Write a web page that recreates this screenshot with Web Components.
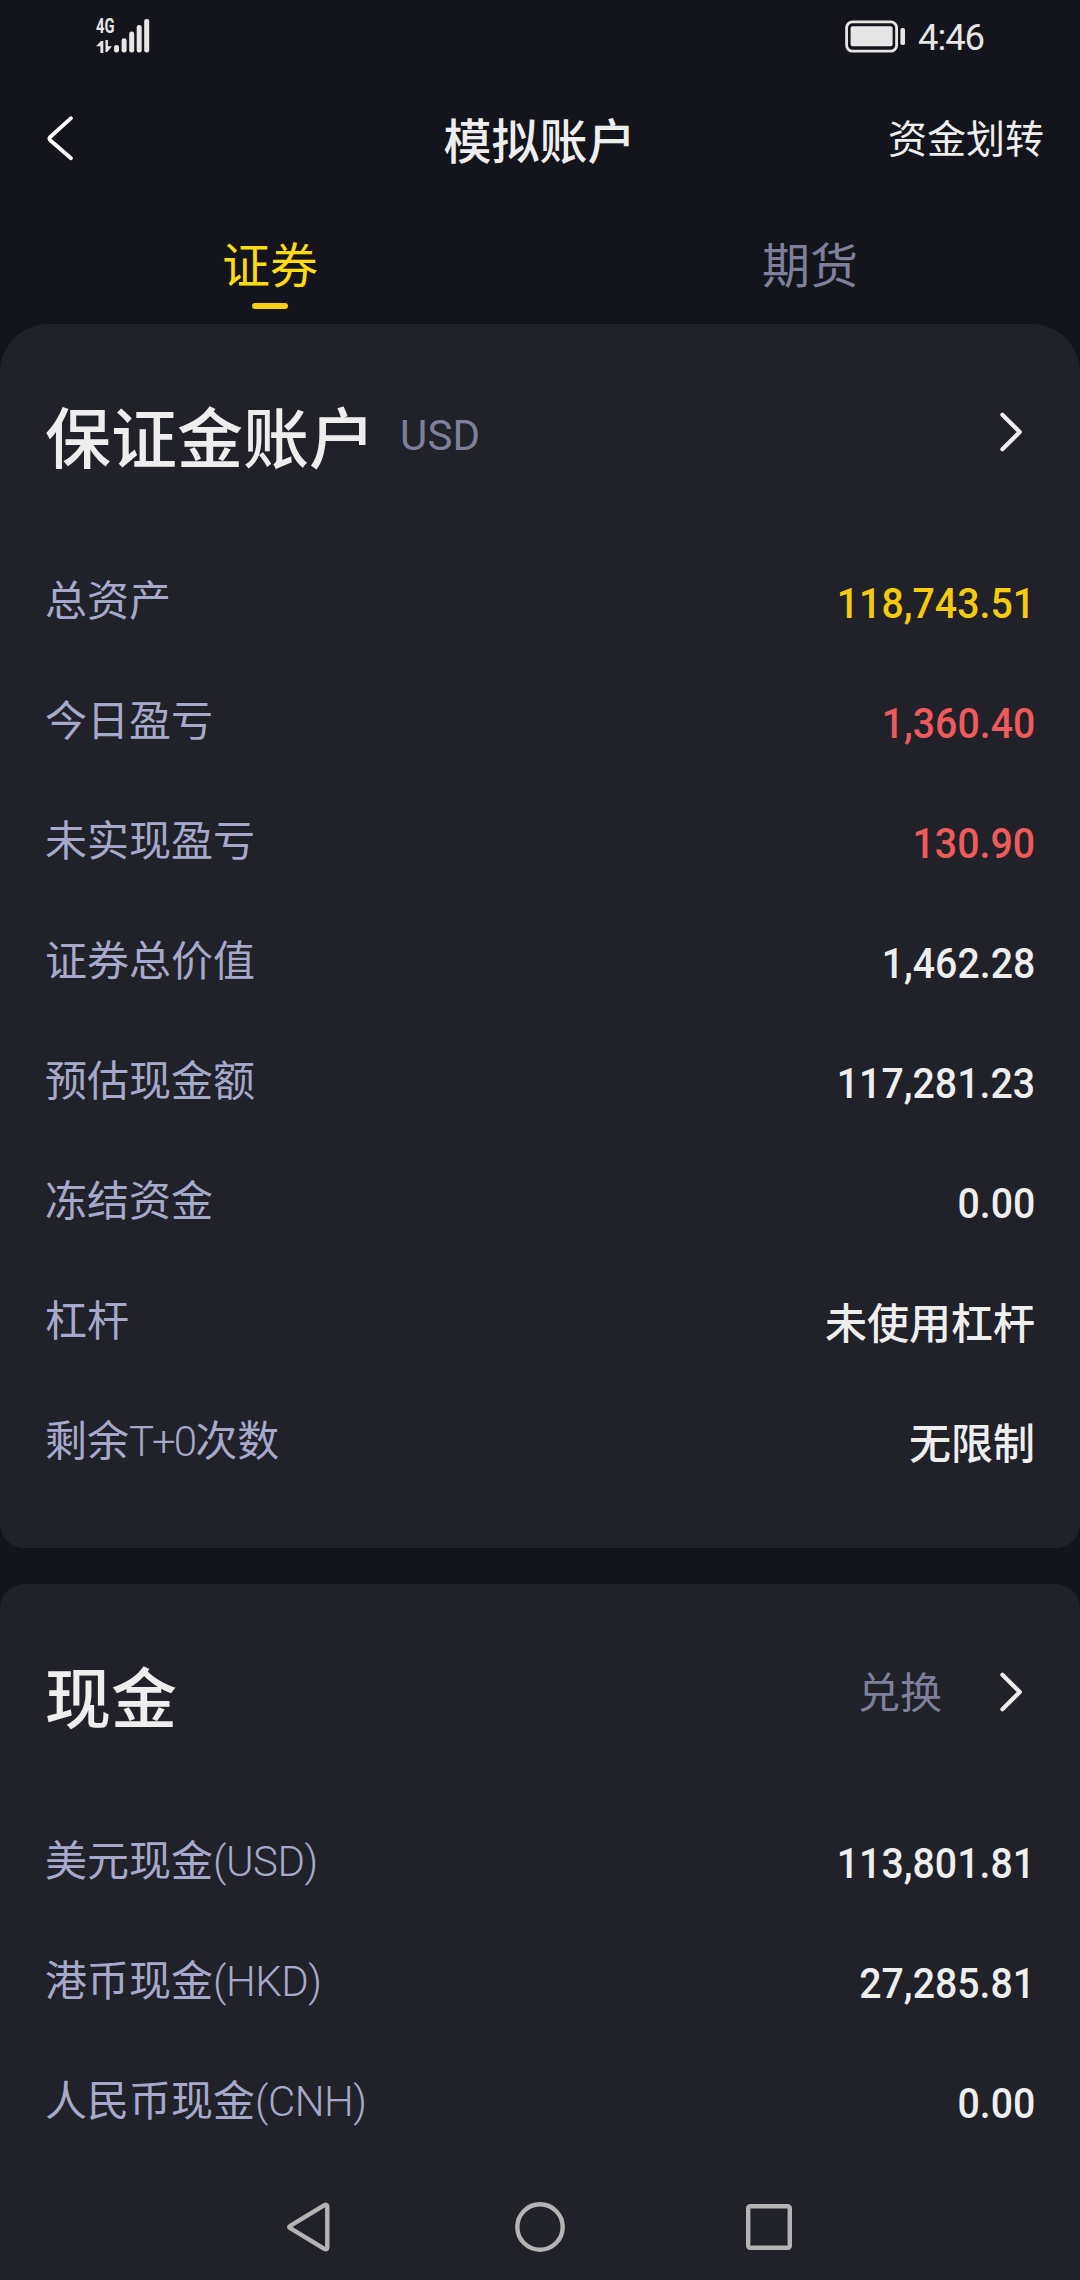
<!DOCTYPE html>
<html lang="zh-CN">
<head>
<meta charset="utf-8">
<title>模拟账户</title>
<style>
html, body { margin: 0; background: #14141c; }
body { width: 1080px; height: 2280px; overflow: hidden; font-family: Roboto, "Noto Sans CJK SC", sans-serif; color: #eee; }
</style>
</head>
<body>
<account-page></account-page>
<script>
const define = (name, html, setup) => customElements.define(name, class extends HTMLElement {
  connectedCallback() {
    if (this.shadowRoot) return;
    const t = document.createElement('template');
    t.innerHTML = html;
    this.attachShadow({ mode: 'open' }).append(t.content.cloneNode(true));
    if (setup) setup(this, this.shadowRoot);
  }
});

define('status-bar', `
<style>
:host { display: flex; justify-content: space-between; align-items: flex-start; height: 72px; padding: 0 97px 0 96px; box-sizing: border-box; }
.left { display: grid; grid-template-columns: 18px 36px; padding-top: 18px; }
.net { font: 700 21px/17px Roboto, sans-serif; transform: scaleX(.7); transform-origin: left; height: 17px; color: #e6e6e6; width: 26px; }
.arrows { grid-row: 2; grid-column: 1; margin-top: 4px; }
.bars { grid-row: 1 / 3; grid-column: 2; }
.right { display: flex; align-items: flex-start; gap: 13px; }
.battery { margin-top: 19px; }
.time { font-size: 36.5px; line-height: 44px; padding-top: 16px; color: #e6e6e6; letter-spacing: -1.1px; width: 65px; white-space: nowrap; }
svg { display: block; }
</style>
<div class="left">
  <span class="net">4G</span>
  <svg class="arrows" width="17" height="13" viewBox="0 0 17 13" fill="#e6e6e6"><path d="M7.3 1v12H4.4V6.3H0L5 1zM9.5 0h2.4v6.2H16L11.2 12H9.5z"/></svg>
  <svg class="bars" width="36" height="36" viewBox="0 0 36 36" fill="#e6e6e6"><rect x="0" y="27" width="5" height="7.5" rx="2.3"/><rect x="7.6" y="20.3" width="5" height="14.2" rx="2.3"/><rect x="15.2" y="13.6" width="5" height="20.9" rx="2.3"/><rect x="22.7" y="7" width="5" height="27.5" rx="2.3"/><rect x="30.2" y="1" width="5" height="33.5" rx="2.3"/></svg>
</div>
<div class="right">
  <svg class="battery" width="61" height="35" viewBox="0 0 61 35"><rect x="2.6" y="2.8" width="50" height="29.4" rx="6" fill="none" stroke="#e6e6e6" stroke-width="2.8"/><rect x="6.6" y="7.3" width="42" height="20" rx="2" fill="#e6e6e6"/><rect x="56.4" y="9" width="4.6" height="17" rx="1.8" fill="#e6e6e6"/></svg>
  <span class="time">4:46</span>
</div>`);

define('chevron-icon', `
<style>:host { display: block; } svg { display: block; }</style>
<svg width="23" height="40" viewBox="0 0 23 40" fill="none" stroke="#eee" stroke-width="4.2" stroke-linecap="round" stroke-linejoin="round"><path d="M2.4 2.7 19.8 20 2.4 37.3"/></svg>`);

define('nav-header', `
<style>
:host { display: grid; grid-template-columns: 1fr auto 1fr; align-items: start; height: 144px; padding: 0 36px 0 45px; box-sizing: border-box; }
svg { display: block; margin-top: 43px; }
.title { font-size: 48px; font-weight: 500; line-height: 60px; padding-top: 41px; margin-right: 10px; }
.action { font-size: 39px; line-height: 50px; padding-top: 43px; text-align: right; }
</style>
<svg width="30" height="48" viewBox="0 0 30 48" fill="none" stroke="#fff" stroke-width="3.8" stroke-linecap="round" stroke-linejoin="round"><path d="M26 3.2 5.2 22 Q3.5 23.6 5.2 25.2L26 43.3"/></svg>
<span class="title"><slot></slot></span>
<span class="action"><slot name="action"></slot></span>`);

define('tab-item', `
<style>
:host { display: flex; flex: 1; flex-direction: column; align-items: center; color: #7e8099; font-size: 48px; line-height: 60px; padding-top: 21px; }
:host([active]) { color: #fddb12; }
i { width: 36px; height: 6px; border-radius: 3px; margin-top: 6px; }
:host([active]) i { background: #f9ce14; }
</style>
<slot></slot><i></i>`);

define('tab-bar', `
<style>:host { display: flex; height: 108px; }</style><slot></slot>`);

define('info-card', `
<style>
:host { display: block; background: #21212a; box-sizing: border-box; padding: 0 45px; border-radius: var(--r, 24px); height: var(--h); }
header { display: flex; align-items: center; height: 218px; }
.name { font-size: 66px; font-weight: 500; line-height: 80px; padding-top: 15px; }
.unit { font-size: 42px; color: #7e8099; margin-left: 25px; padding-top: 4px; letter-spacing: .2px; }
.link { font-size: 42px; color: #7e8099; margin-left: auto; margin-right: 58px; line-height: 60px; padding-top: 2px; }
chevron-icon { margin: 0 12px 2px 0; }
</style>
<header><span class="name"></span><span class="unit"></span><span class="link"></span><chevron-icon></chevron-icon></header>
<slot></slot>`, (el, r) => {
  for (const k of ['name', 'unit', 'link']) r.querySelector('.' + k).textContent = el.getAttribute(k) || '';
});

define('info-row', `
<style>
:host { display: flex; align-items: center; justify-content: space-between; height: 120px; font-size: 42px; line-height: 60px; color: #eee; }
.label { color: #a6a9c9; font-weight: 400; }
.label b { font-weight: 300; letter-spacing: -.5px; }
.label b.mid { letter-spacing: -2px; }
.value { font-weight: 500; padding-top: 6px; }
.value.num { transform: scaleX(.935); transform-origin: right; padding-top: 3px; }
:host([tone="gold"]) { color: #f6cb0e; }
:host([tone="up"]) { color: #ee5b5a; }
</style>
<span class="label"></span><span class="value"><slot></slot></span>`, (el, r) => {
  const label = r.querySelector('.label');
  for (const part of el.getAttribute('label').split(/([ -~]+)/)) {
    if (/^[ -~]+$/.test(part)) {
      const b = document.createElement('b');
      b.textContent = part;
      if (!part.startsWith('(')) b.className = 'mid';
      label.append(b);
    } else label.append(part);
  }
  if (/^[\d.,]+$/.test(el.textContent)) r.querySelector('.value').classList.add('num');
});

define('system-nav', `
<style>:host { display: flex; justify-content: center; gap: 180px; height: 60px; padding-top: 2px; } svg { display: block; }</style>
<svg width="50" height="60" viewBox="0 0 50 60" fill="none" stroke="#b4b4b4" stroke-width="4.4" stroke-linejoin="round"><path d="M5.2 27.8 39.4 7.2Q42.3 6 42.3 8.5V49.5Q42.3 52 39.4 50.8L5.2 30.2Q3.2 29 5.2 27.8z"/></svg>
<svg width="50" height="60" viewBox="0 0 50 60" fill="none" stroke="#b4b4b4" stroke-width="4.4"><circle cx="25" cy="29" r="22.7"/></svg>
<svg width="50" height="60" viewBox="0 0 50 60" fill="none" stroke="#b4b4b4" stroke-width="4.4"><rect x="3.2" y="8.2" width="41.6" height="41.6" rx="2"/></svg>`);

define('account-page', `
<style>
:host { display: flex; flex-direction: column; width: 1080px; height: 2280px; overflow: hidden; background: #14141c; }
.main { --r: 48px 48px 24px 24px; --h: 1224px; }
.cash { --r: 24px 24px 0 0; --h: 612px; margin-top: 36px; }
.bottom { background: #21212a; height: 84px; }
</style>
<status-bar></status-bar>
<nav-header>模拟账户<span slot="action">资金划转</span></nav-header>
<tab-bar><tab-item active>证券</tab-item><tab-item>期货</tab-item></tab-bar>
<info-card class="main" name="保证金账户" unit="USD">
  <info-row label="总资产" tone="gold">118,743.51</info-row>
  <info-row label="今日盈亏" tone="up">1,360.40</info-row>
  <info-row label="未实现盈亏" tone="up">130.90</info-row>
  <info-row label="证券总价值">1,462.28</info-row>
  <info-row label="预估现金额">117,281.23</info-row>
  <info-row label="冻结资金">0.00</info-row>
  <info-row label="杠杆">未使用杠杆</info-row>
  <info-row label="剩余T+0次数">无限制</info-row>
</info-card>
<info-card class="cash" name="现金" link="兑换">
  <info-row label="美元现金(USD)">113,801.81</info-row>
  <info-row label="港币现金(HKD)">27,285.81</info-row>
  <info-row label="人民币现金(CNH)">0.00</info-row>
</info-card>
<div class="bottom"><system-nav></system-nav></div>`);
</script>
</body>
</html>
